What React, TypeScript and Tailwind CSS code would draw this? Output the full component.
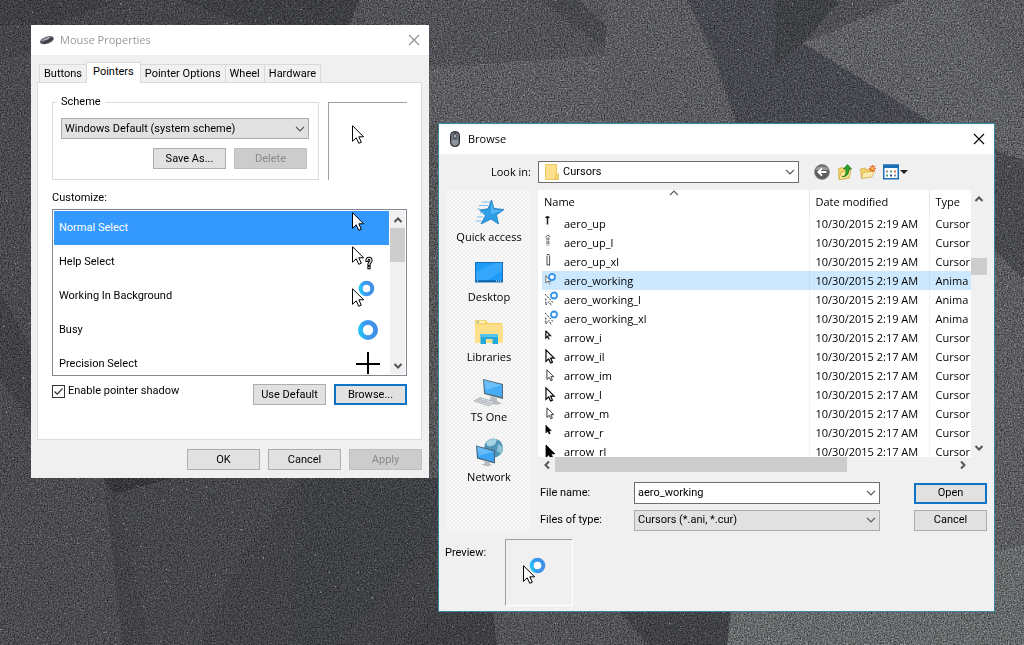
import { useState } from 'react';
import type { ReactNode } from 'react';
import clsx from 'clsx';

type CursorKind = 'arrow' | 'help' | 'working' | 'busy' | 'cross';
type FileGlyph = 'up' | 'upThin' | 'upWide' | 'working' | 'workingDashed' | 'small' | 'outline' | 'outlineThin' | 'solid' | 'solidLarge';

const TABS = ['Buttons', 'Pointers', 'Pointer Options', 'Wheel', 'Hardware'];

const POINTERS: { label: string; kind: CursorKind }[] = [
    { label: 'Normal Select', kind: 'arrow' },
    { label: 'Help Select', kind: 'help' },
    { label: 'Working In Background', kind: 'working' },
    { label: 'Busy', kind: 'busy' },
    { label: 'Precision Select', kind: 'cross' },
];

const FILES: { name: string; date: string; type: string; glyph: FileGlyph }[] = [
    { name: 'aero_up', date: '10/30/2015 2:19 AM', type: 'Cursor', glyph: 'up' },
    { name: 'aero_up_l', date: '10/30/2015 2:19 AM', type: 'Cursor', glyph: 'upThin' },
    { name: 'aero_up_xl', date: '10/30/2015 2:19 AM', type: 'Cursor', glyph: 'upWide' },
    { name: 'aero_working', date: '10/30/2015 2:19 AM', type: 'Anima', glyph: 'working' },
    { name: 'aero_working_l', date: '10/30/2015 2:19 AM', type: 'Anima', glyph: 'workingDashed' },
    { name: 'aero_working_xl', date: '10/30/2015 2:19 AM', type: 'Anima', glyph: 'workingDashed' },
    { name: 'arrow_i', date: '10/30/2015 2:17 AM', type: 'Cursor', glyph: 'small' },
    { name: 'arrow_il', date: '10/30/2015 2:17 AM', type: 'Cursor', glyph: 'outline' },
    { name: 'arrow_im', date: '10/30/2015 2:17 AM', type: 'Cursor', glyph: 'outlineThin' },
    { name: 'arrow_l', date: '10/30/2015 2:17 AM', type: 'Cursor', glyph: 'outline' },
    { name: 'arrow_m', date: '10/30/2015 2:17 AM', type: 'Cursor', glyph: 'outlineThin' },
    { name: 'arrow_r', date: '10/30/2015 2:17 AM', type: 'Cursor', glyph: 'solid' },
    { name: 'arrow_rl', date: '10/30/2015 2:17 AM', type: 'Cursor', glyph: 'solidLarge' },
];

const ARROW = 'M.5 .7V16.3L4.2 12.8L6.8 18.3L9.3 17.2L6.8 11.8H11.6Z';

function Wallpaper() {
    return (
        <svg className="absolute inset-0 h-full w-full" viewBox="0 0 1024 645" preserveAspectRatio="none" aria-hidden="true">
            <defs>
                <filter id="grain" x="0" y="0" width="100%" height="100%" colorInterpolationFilters="sRGB">
                    <feTurbulence type="fractalNoise" baseFrequency="0.7" numOctaves="2" seed="4" />
                    <feColorMatrix type="matrix" values="1.1 0 0 0 -0.06  1.1 0 0 0 -0.06  1.1 0 0 0 -0.06  0 0 0 0 1" />
                </filter>
                <filter id="specks" x="0" y="0" width="100%" height="100%" colorInterpolationFilters="sRGB">
                    <feTurbulence type="fractalNoise" baseFrequency="0.35" numOctaves="1" seed="11" />
                    <feColorMatrix type="matrix" values="0 0 0 0 0.72  0 0 0 0 0.73  0 0 0 0 0.75  9 0 0 0 -6.5" />
                </filter>
            </defs>
            <rect width="1024" height="645" fill="#56575b" />
            <path d="M0 0H359L345 40L0 120Z" fill="#45464a" />
            <path d="M0 0H120L50 25H0Z" fill="#3f4044" />
            <path d="M180 0H359L349 25H250Z" fill="#3e3f44" />
            <path d="M359 0H570L608 28V54L424 70H345Z" fill="#525358" />
            <path d="M540 0H578L608 28V50Z" fill="#48494d" />
            <path d="M424 68L608 55L600 123H424Z" fill="#5d5e62" />
            <path d="M608 0H688L736 123H600Z" fill="#5b5c60" />
            <path d="M688 0H775L933 123H736L716 60Z" fill="#484950" />
            <path d="M775 0H841L803 43L775 66Z" fill="#404145" />
            <path d="M841 0H906L803 43Z" fill="#505155" />
            <path d="M906 0H1024V160L933 123L803 43Z" fill="#606165" />
            <path d="M960 0H1024V90Z" fill="#5b5c60" />
            <path d="M994 150L1024 160V280L994 250Z" fill="#4a4b50" />
            <path d="M994 250L1024 280V540L994 560Z" fill="#5c5d61" />
            <path d="M0 60L31 52V360L0 430Z" fill="#4a4b50" />
            <path d="M0 290L31 350V420L0 380Z" fill="#414246" />
            <path d="M0 380L31 420V478H0Z" fill="#4a4b4f" />
            <path d="M0 478H104L122 645H0Z" fill="#4b4c50" />
            <path d="M104 478H438V645H122Z" fill="#424347" />
            <path d="M115 494L104 478H172Z" fill="#36373c" />
            <path d="M172 478H300L240 560L200 645H150L115 494Z" fill="#46474b" />
            <path d="M300 478H438V530L340 645H290Z" fill="#404146" />
            <path d="M438 605H493L497 645H400Z" fill="#3f4044" />
            <path d="M493 605H614L648 645H497Z" fill="#525357" />
            <path d="M614 605H732L727 645H648Z" fill="#414246" />
            <path d="M732 605L1024 545V645H727Z" fill="#676a6b" />
            <rect width="1024" height="645" filter="url(#grain)" className="opacity-70 mix-blend-overlay" />
            <rect width="1024" height="645" filter="url(#specks)" className="opacity-70" />
        </svg>
    );
}

function Chevron({ className, thick = false }: { className?: string; thick?: boolean }) {
    return (
        <svg viewBox="0 0 10 6" className={clsx('h-1.5 w-2.5 shrink-0', className)} fill="none" stroke="#555" strokeWidth={thick ? 2 : 1.2} aria-hidden="true">
            {thick ? <path d="M1.5 1L5 4.5L8.5 1" /> : <path d="M1 .8L5 4.8L9 .8" />}
        </svg>
    );
}

function CloseButton({ muted = false }: { muted?: boolean }) {
    return (
        <button type="button" aria-label="Close" className="flex h-full w-[31px] items-center justify-center">
            <svg viewBox="0 0 12 12" className="h-3 w-3" fill="none" stroke={muted ? '#8c8c8c' : '#000'} strokeWidth="1.1">
                <path d="M1 1L11 11M11 1L1 11" />
            </svg>
        </button>
    );
}

interface PushButtonProps {
    children: ReactNode;
    primary?: boolean;
    disabled?: boolean;
}

function PushButton({ children, primary = false, disabled = false }: PushButtonProps) {
    return (
        <button
            type="button"
            disabled={disabled}
            className={clsx(
                'flex h-[21px] w-[73px] shrink-0 items-center justify-center',
                primary ? 'border-2 border-[#0f74c8] bg-[#e1e1e1]' : 'border',
                !primary && (disabled ? 'border-[#bfbfbf] bg-[#cccccc] text-[#8a8a8a]' : 'border-[#adadad] bg-[#e1e1e1]'),
            )}
        >
            {children}
        </button>
    );
}

function Ring({ cx, cy, r, width, id }: { cx: number; cy: number; r: number; width: number; id: string }) {
    return (
        <>
            <defs>
                <linearGradient id={id} x1="0" y1="0.6" x2="1" y2="0.4">
                    <stop offset="0" stopColor="#25c3f5" />
                    <stop offset="0.3" stopColor="#3b9cf0" />
                    <stop offset="1" stopColor="#3f8fe6" />
                </linearGradient>
            </defs>
            <circle cx={cx} cy={cy} r={r} fill="#fff" stroke={`url(#${id})`} strokeWidth={width} />
        </>
    );
}

function CursorPicture({ kind, id }: { kind: CursorKind; id: string }) {
    return (
        <svg viewBox="0 0 32 32" className="h-8 w-8 shrink-0" aria-hidden="true">
            {kind === 'cross' && <path d="M4 16H28M16 4V28" stroke="#000" strokeWidth="2" />}
            {kind === 'busy' && <Ring cx={16} cy={16} r={7.6} width={4.8} id={id} />}
            {kind === 'working' && <Ring cx={14.5} cy={8.5} r={5.8} width={4} id={id} />}
            {kind !== 'cross' && kind !== 'busy' && (
                <path
                    d={ARROW}
                    transform={kind === 'working' ? 'translate(0 8)' : undefined}
                    fill="#fff"
                    stroke="#000"
                    strokeWidth="1"
                    strokeLinejoin="round"
                />
            )}
            {kind === 'help' && (
                <g fill="none" strokeLinecap="square">
                    <path d="M15 14.5C15 11.500 19 11.500 19 14.500C19 16.500 17 16.400 17 18.500M17 21.300V21.600" stroke="#000" strokeWidth="3.2" />
                    <path d="M15 14.5C15 11.500 19 11.500 19 14.500C19 16.500 17 16.400 17 18.500M17 21.300V21.600" stroke="#fff" strokeWidth="1.2" />
                </g>
            )}
        </svg>
    );
}

function FileIcon({ glyph }: { glyph: FileGlyph }) {
    return (
        <svg viewBox="0 0 16 18" className="h-[18px] w-4 shrink-0" fill="none" stroke="#222" aria-hidden="true">
            {glyph === 'up' && <path d="M2.5 2.5V9.5M.8 3C1.200 1.200 3.800 1.200 4.200 3" strokeWidth="1.500" />}
            {glyph === 'upThin' && <path d="M2 3.500V11.500M3.800 3.500V11.500M.3 3.500L2 1.500H4L5.500 3.500" strokeWidth=".8" strokeDasharray="3 .6" />}
            {glyph === 'upWide' && <path d="M2 2.500V12M4.600 2.500V12M2 12H5M2 1.500H4.600" strokeWidth=".8" />}
            {glyph === 'working' && (
                <>
                    <path d="M.8 3V11L3 9L5 12.500M1 4L6 9.400H3" stroke="#555" fill="#fff" strokeWidth=".8" />
                    <circle cx="7" cy="5" r="3" fill="#fff" stroke="#3895ee" strokeWidth="1.800" />
                </>
            )}
            {glyph === 'workingDashed' && (
                <>
                    <path d="M0 3L8 11.500M.8 7.500V14L4 10.500L6.500 15" strokeWidth="1" strokeDasharray="2 1.200" />
                    <circle cx="9" cy="4.500" r="3" fill="#fff" stroke="#3895ee" strokeWidth="1.800" />
                </>
            )}
            {glyph === 'small' && <path d="M.8 1.800V9L2.600 7.400L4.200 10.500M1 2L5.400 6.500H3.200" strokeWidth="1.300" />}
            {glyph === 'outline' && <path d={ARROW} transform="translate(.6 1.4) scale(.74)" strokeWidth="1.600" fill="#fff" stroke="#000" />}
            {glyph === 'outlineThin' && <path d={ARROW} transform="translate(1.6 2.4) scale(.62)" strokeWidth="1.400" fill="#fff" />}
            {glyph === 'solid' && <path d={ARROW} transform="translate(.6 .8) scale(.5)" fill="#000" stroke="#000" />}
            {glyph === 'solidLarge' && <path d={ARROW} transform="translate(.6 1.4) scale(.8)" fill="#000" stroke="#000" />}
        </svg>
    );
}

function MousePropertiesWindow() {
    const [tab, setTab] = useState('Pointers');
    const [selected, setSelected] = useState('Normal Select');
    const [shadow, setShadow] = useState(true);

    return (
        <section
            aria-label="Mouse Properties"
            className="absolute top-[25px] left-[31px] w-[398px] bg-[#f0f0f0] font-['Roboto','Liberation_Sans',sans-serif] text-[11px] leading-4 text-black"
        >
            <header className="flex h-[30px] items-center bg-white pl-2">
                <svg viewBox="0 0 16 16" className="h-4 w-4" aria-hidden="true">
                    <path d="M1 9.500C2 6 8 4 12 4.200C15 4.500 15.500 6.500 14 8.500C12 11 7 12.500 4 12.200C2 12 .8 11 1 9.500Z" fill="#55585e" />
                    <path d="M2 9.300C4 6.500 8 5 11.500 4.800L9 7.500C6.500 8 4 9 2 9.300Z" fill="#a6aab0" />
                    <path d="M5 11L13.500 6.500" stroke="#34373c" strokeWidth="1.500" />
                </svg>
                <h1 className="ml-[5px] flex-1 font-['Open_Sans','Noto_Sans',sans-serif] text-[#999]">Mouse Properties</h1>
                <CloseButton muted />
            </header>

            <div className="pt-[7px] pr-[7px] pb-2 pl-1.5">
                <div role="tablist" className="flex items-end pl-[3px]">
                    {TABS.map((name) => (
                        <button
                            key={name}
                            type="button"
                            role="tab"
                            aria-selected={tab === name}
                            onClick={() => setTab(name)}
                            className={clsx(
                                '-ml-px border border-b-0 border-[#d9d9d9]',
                                tab === name ? 'relative -mb-px h-[21px] bg-white px-1.5 pb-0.5' : 'h-[18px] bg-[#f0f0f0] px-1',
                            )}
                        >
                            {name}
                        </button>
                    ))}
                </div>

                <div className="border border-[#dcdcdc] bg-white px-3.5 pt-[11px] pb-[34px]">
                    <div className="flex gap-[9px]">
                        <fieldset className="min-w-0 flex-1 border border-[#dcdcdc] pr-[9px] pb-2.5 pl-2">
                            <legend className="-ml-1 px-1">Scheme</legend>
                            <div className="relative mt-2 flex items-center">
                                <select
                                    aria-label="Scheme"
                                    className="h-[21px] w-full appearance-none border border-[#adadad] bg-[#e1e1e1] pl-[3px]"
                                    defaultValue="default"
                                >
                                    <option value="default">Windows Default (system scheme)</option>
                                    <option value="none">(None)</option>
                                </select>
                                <Chevron className="pointer-events-none absolute right-1" />
                            </div>
                            <div className="mt-[9px] flex justify-end gap-2 pr-0.5">
                                <PushButton>Save As...</PushButton>
                                <PushButton disabled>Delete</PushButton>
                            </div>
                        </fieldset>
                        <div className="mt-2 w-[79px] border-t border-l border-[#a0a0a0] pt-[22px] pl-[23px]">
                            <CursorPicture kind="arrow" id="scheme-ring" />
                        </div>
                    </div>

                    <p id="customize" className="mt-2.5">
                        Customize:
                    </p>
                    <div className="mt-[3px] flex h-[167px] gap-px border border-[#828790] p-px">
                        <ul role="listbox" aria-labelledby="customize" className="flex-1 overflow-hidden">
                            {POINTERS.map(({ label, kind }) => (
                                <li
                                    key={label}
                                    role="option"
                                    aria-selected={selected === label}
                                    onClick={() => setSelected(label)}
                                    className={clsx(
                                        'flex h-[34px] items-center justify-between px-[5px]',
                                        selected === label && 'bg-[#3399ff] text-white',
                                    )}
                                >
                                    {label}
                                    <CursorPicture kind={kind} id={`ring-${kind}`} />
                                </li>
                            ))}
                        </ul>
                        <div className="flex w-[15px] flex-col items-center bg-[#f0f0f0]">
                            <button type="button" aria-label="Scroll up" className="flex h-[17px] w-full shrink-0 items-center justify-center">
                                <Chevron thick className="rotate-180" />
                            </button>
                            <div className="h-[34px] w-full bg-[#cdcdcd]" />
                            <div className="flex-1" />
                            <button type="button" aria-label="Scroll down" className="flex h-[17px] w-full shrink-0 items-center justify-center">
                                <Chevron thick />
                            </button>
                        </div>
                    </div>

                    <div className="mt-2 flex items-start gap-2">
                        <label className="flex flex-1 items-center gap-[3px] leading-[14px]">
                            <span className="relative flex">
                                <input
                                    type="checkbox"
                                    checked={shadow}
                                    onChange={(e) => setShadow(e.target.checked)}
                                    className="h-[13px] w-[13px] appearance-none border border-[#333] bg-white"
                                />
                                {shadow && (
                                    <svg viewBox="0 0 13 13" className="pointer-events-none absolute inset-0" fill="none" stroke="#333" strokeWidth="1.2">
                                        <path d="M2.5 6.5L5.2 9.2L10.5 3.5" />
                                    </svg>
                                )}
                            </span>
                            Enable pointer shadow
                        </label>
                        <PushButton>Use Default</PushButton>
                        <PushButton primary>Browse...</PushButton>
                    </div>
                </div>

                <div className="mt-[9px] flex justify-end gap-2">
                    <PushButton>OK</PushButton>
                    <PushButton>Cancel</PushButton>
                    <PushButton disabled>Apply</PushButton>
                </div>
            </div>
        </section>
    );
}

function QuickAccessIcon() {
    return (
        <svg viewBox="0 0 32 32" className="h-8 w-8" aria-hidden="true">
            <path d="M18.500 3L21 11.500L31 12.500L23.500 18L25.500 27L18 22L8 27L12.500 18.500L6.500 13L15 11.800Z" fill="#2f9fe8" stroke="#1976c0" strokeWidth=".8" />
            <path d="M18.500 5L20.500 13L29 13.500L18 17Z" fill="#56b8f5" />
            <path d="M9 5H17M6 8.500H15M4 12H7M7 16H11M4 20H10M3 24H8" stroke="#7cc2f0" strokeWidth="1" />
        </svg>
    );
}

function DesktopIcon() {
    return (
        <svg viewBox="0 0 32 32" className="h-8 w-8" aria-hidden="true">
            <rect x="2.5" y="5.500" width="27" height="19.500" fill="#1e9bf8" stroke="#1272bd" />
            <path d="M3 24V15.500L22 6H29V13.500L14 24Z" fill="#35a8fb" />
            <path d="M3 24H29" stroke="#0c5ea3" strokeWidth="1.500" />
            <path d="M4 24H6M23 24H28" stroke="#e8f5ff" strokeDasharray="1 1" />
        </svg>
    );
}

function LibrariesIcon() {
    return (
        <svg viewBox="0 0 32 32" className="h-8 w-8" aria-hidden="true">
            <path d="M2 3H13L15 6H29V25H2Z" fill="#f7d268" />
            <path d="M3 4H12V6H3Z" fill="#fff4c4" />
            <path d="M3.500 5H6" stroke="#3aa655" />
            <path d="M2 7.500H30V26H2Z" fill="#ffe08a" />
            <path d="M7.500 27V17H25V27H19.500V22H13V27Z" fill="#22a8dc" />
            <path d="M7.500 17H25V20H7.500Z" fill="#55c5ee" />
        </svg>
    );
}

function ComputerIcon() {
    return (
        <svg viewBox="0 0 32 32" className="h-8 w-8" aria-hidden="true">
            <path d="M10 2L30 7V22L11 17Z" fill="#5a6b78" />
            <path d="M11 3.200L29 8V20L12 16Z" fill="#45acf5" />
            <path d="M11 3.200L29 8L13 13Z" fill="#6cc0fa" />
            <path d="M18 19L24 21V24L29 26.500L23 28L16 25.500Z" fill="#b9bfc4" />
            <path d="M7 20.500L22 25L16 29L1 24Z" fill="#dfe2e4" stroke="#9ca3a8" strokeWidth=".7" />
            <path d="M5 22L19 26.500M3.500 23L17.500 27.600M9 21.500L4 24.500M14 23L9 26" stroke="#a9afb4" strokeWidth=".7" />
        </svg>
    );
}

function NetworkIcon() {
    return (
        <svg viewBox="0 0 32 32" className="h-8 w-8" aria-hidden="true">
            <circle cx="20.500" cy="11" r="9.500" fill="#4f95b8" />
            <path d="M13 5.500C16 1.500 21 1.500 24 2.500L22 7.500L17 9.500L14 8.500Z" fill="#a6d2df" />
            <path d="M25 6.500L30 10.500L28 16.500L24 14.500Z" fill="#8fc4d6" />
            <path d="M3 8.500L22 13.500V26.500L4 21.500Z" fill="#4a6172" />
            <path d="M4 9.800L21 14.500V25L5 20.500Z" fill="#3ba7f4" />
            <path d="M4 9.800L21 14.500L6 18.500Z" fill="#67bdfa" />
            <path d="M11 23.500L17 25.500V27.500H20L15 29.500L8 27.500L12 26.500Z" fill="#b4bbc0" />
        </svg>
    );
}

const PLACES: { label: string; icon: ReactNode }[] = [
    { label: 'Quick access', icon: <QuickAccessIcon /> },
    { label: 'Desktop', icon: <DesktopIcon /> },
    { label: 'Libraries', icon: <LibrariesIcon /> },
    { label: 'TS One', icon: <ComputerIcon /> },
    { label: 'Network', icon: <NetworkIcon /> },
];

function BrowseToolbar() {
    return (
        <div className="flex items-center gap-[7px]">
            <button type="button" aria-label="Back">
                <svg viewBox="0 0 16 16" className="h-4 w-4">
                    <circle cx="8" cy="8" r="7.500" fill="#5c5c5c" stroke="#8f8f8f" strokeWidth=".8" />
                    <path d="M1.500 6C3 1 13 1 14.500 6Z" fill="#9b9b9b" />
                    <path d="M12.500 8H4.500M8 4.300L4.200 8L8 11.700" stroke="#fff" strokeWidth="1.800" fill="none" />
                </svg>
            </button>
            <button type="button" aria-label="Up one level">
                <svg viewBox="0 0 16 16" className="h-4 w-4">
                    <path d="M1.500 4.500L6 3.500L7 5H12.500V14L2 15.500Z" fill="#f5d76e" stroke="#c9a234" strokeWidth=".7" />
                    <path d="M4 8L14 6L12 14L2 15.500Z" fill="#fbe798" stroke="#c9a234" strokeWidth=".7" />
                    <path d="M5 12.500C9 12.500 9.200 9 9 5H6.500L10.500 .5L14.500 5H12C12 10 10 13 5 12.500Z" fill="#2fa32f" stroke="#126b18" strokeWidth=".7" />
                </svg>
            </button>
            <button type="button" aria-label="Create new folder">
                <svg viewBox="0 0 16 16" className="h-4 w-4">
                    <path d="M.5 5L5 4L6 5.500H11.500V12L1.500 14.500Z" fill="#f3d36b" stroke="#cda640" strokeWidth=".7" />
                    <path d="M3 8.500L14.500 7L12 13L1.500 14.500Z" fill="#fcebae" stroke="#cda640" strokeWidth=".7" />
                    <path d="M12.500 1V8M9 4.500H16M10 2L15 7M15 2L10 7" stroke="#e8622a" strokeWidth="1.100" />
                    <circle cx="12.500" cy="4.500" r="1.300" fill="#ffd24a" />
                </svg>
            </button>
            <button type="button" aria-label="View menu" className="flex items-center">
                <svg viewBox="0 0 16 16" className="h-4 w-4">
                    <rect x=".75" y="1.250" width="14.500" height="13.500" fill="#fff" stroke="#1b6fb5" strokeWidth="1.500" />
                    <path d="M0 .5H16V4H0Z" fill="#1b6fb5" />
                    <path d="M3 7.500H5M11 11.500H13" stroke="#8a8f94" strokeWidth="2" />
                    <path d="M7 7.500H9M3 11.500H5" stroke="#4b9e6a" strokeWidth="2" />
                    <path d="M11 7.500H13" stroke="#d07a52" strokeWidth="2" />
                    <path d="M7 11.500H9" stroke="#2c4f9c" strokeWidth="2" />
                </svg>
                <svg viewBox="0 0 8 4" className="ml-px h-1 w-2">
                    <path d="M0 0H8L4 4Z" fill="#222" />
                </svg>
            </button>
        </div>
    );
}

function BrowseWindow() {
    const [selected, setSelected] = useState('aero_working');

    return (
        <section
            aria-label="Browse"
            className="absolute top-[123px] left-[438px] w-[557px] border border-[#3c87a3] bg-[#f0f0f0] font-['Roboto','Liberation_Sans',sans-serif] text-[11px] leading-4 text-black"
        >
            <header className="flex h-[30px] items-center bg-white pl-2">
                <svg viewBox="0 0 16 16" className="h-4 w-4" aria-hidden="true">
                    <rect x="3.500" y=".5" width="9" height="15" rx="4" fill="#6a7078" stroke="#25282c" />
                    <path d="M5 9H11V12C11 15 5 15 5 12Z" fill="#8d949c" />
                    <path d="M8 1V8" stroke="#25282c" />
                    <rect x="7" y="3" width="2" height="4" rx="1" fill="#c9ced3" stroke="#25282c" strokeWidth=".5" />
                </svg>
                <h2 className="ml-[5px] flex-1 font-['Open_Sans','Noto_Sans',sans-serif]">Browse</h2>
                <CloseButton />
            </header>

            <div className="pt-[7px] pr-[7px] pb-[5px] pl-1.5">
                <div className="flex h-[22px] items-center">
                    <label htmlFor="look-in" className="w-[86px] text-right font-['Open_Sans','Noto_Sans',sans-serif]">
                        Look in:
                    </label>
                    <div className="relative mr-[15px] ml-[7px] flex w-[261px] items-center">
                        <select id="look-in" className="h-[22px] w-full appearance-none border border-[#6e6e6e] bg-white pl-6">
                            <option>Cursors</option>
                        </select>
                        <svg viewBox="0 0 14 16" className="pointer-events-none absolute left-[7px] h-4 w-3.5" aria-hidden="true">
                            <path d="M.5 .5H11.500V15.500H.5Z" fill="#fce08b" stroke="#eec65a" />
                            <path d="M11 10H13.500V15.500H10.500Z" fill="#f5d675" stroke="#e3b94c" strokeWidth=".7" />
                        </svg>
                        <Chevron className="pointer-events-none absolute right-1" />
                    </div>
                    <BrowseToolbar />
                </div>

                <div className="mt-[7px] flex gap-[7px]">
                    <nav
                        aria-label="Places"
                        className="ml-0.5 flex w-[84px] flex-col gap-3 bg-[#f0f0f0] bg-[conic-gradient(#f8f8f8_25%,#f0f0f0_0_50%,#f8f8f8_0_75%,#f0f0f0_0)] bg-[size:4px_4px] pt-[7px] font-['Open_Sans','Noto_Sans',sans-serif]"
                    >
                        {PLACES.map(({ label, icon }) => (
                            <button key={label} type="button" className="flex flex-col items-center">
                                {icon}
                                {label}
                            </button>
                        ))}
                    </nav>

                    <div className="min-w-0 flex-1">
                        <div className="flex">
                            <div className="h-[267px] min-w-0 flex-1 overflow-hidden bg-white pl-1 font-['Open_Sans','Noto_Sans',sans-serif]">
                                <table className="w-full table-fixed">
                                    <colgroup>
                                        <col />
                                        <col className="w-[120px]" />
                                        <col className="w-[42px]" />
                                    </colgroup>
                                    <thead>
                                        <tr className="h-6 text-left">
                                            <th className="relative pl-0.5 font-normal">
                                                Name
                                                <Chevron className="absolute top-0 left-1/2 -ml-1.5 rotate-180" />
                                            </th>
                                            <th className="border-l border-[#e5e5e5] pl-1.5 font-normal">Date modified</th>
                                            <th className="border-l border-[#e5e5e5] pl-1.5 font-normal">Type</th>
                                        </tr>
                                    </thead>
                                    <tbody>
                                        {FILES.map((file) => (
                                            <tr
                                                key={file.name}
                                                onClick={() => setSelected(file.name)}
                                                className={clsx('h-[19px]', selected === file.name && 'bg-[#cce8ff]')}
                                            >
                                                <td>
                                                    <div className="flex h-[19px] items-center gap-[3px] pl-[3px]">
                                                        <FileIcon glyph={file.glyph} />
                                                        {file.name}
                                                    </div>
                                                </td>
                                                <td className="border-l border-black/5 pl-1.5 whitespace-nowrap">{file.date}</td>
                                                <td className="border-l border-black/5 pl-1.5 whitespace-nowrap">{file.type}</td>
                                            </tr>
                                        ))}
                                    </tbody>
                                </table>
                            </div>
                            <div className="flex w-4 flex-col">
                                <button type="button" aria-label="Scroll up" className="flex h-[18px] items-center justify-center">
                                    <Chevron thick className="rotate-180" />
                                </button>
                                <div className="mt-[50px] h-[17px] bg-[#cdcdcd]" />
                                <div className="flex-1" />
                                <button type="button" aria-label="Scroll down" className="flex h-[18px] items-center justify-center">
                                    <Chevron thick />
                                </button>
                            </div>
                        </div>
                        <div className="flex h-[15px] items-center pr-4">
                            <button type="button" aria-label="Scroll left" className="flex w-[17px] items-center justify-center">
                                <Chevron thick className="rotate-90" />
                            </button>
                            <div className="h-full w-[292px] bg-[#cdcdcd]" />
                            <div className="flex-1" />
                            <button type="button" aria-label="Scroll right" className="flex w-[17px] items-center justify-center">
                                <Chevron thick className="-rotate-90" />
                            </button>
                        </div>

                        <div className="mt-2.5 flex h-[22px] items-center">
                            <label htmlFor="file-name" className="w-24 pl-0.5">
                                File name:
                            </label>
                            <div className="mr-[34px] flex h-[22px] min-w-0 flex-1 items-center border border-[#6e6e6e] bg-white">
                                <input
                                    id="file-name"
                                    type="text"
                                    value={selected}
                                    onChange={(e) => setSelected(e.target.value)}
                                    className="min-w-0 flex-1 bg-transparent pl-[3px] outline-none"
                                />
                                <button type="button" aria-label="Recent files" className="pr-[3px]">
                                    <Chevron />
                                </button>
                            </div>
                            <PushButton primary>Open</PushButton>
                        </div>
                        <div className="mt-[5px] flex h-[22px] items-center">
                            <label htmlFor="file-type" className="w-24 pl-0.5">
                                Files of type:
                            </label>
                            <div className="relative mr-[34px] flex min-w-0 flex-1 items-center">
                                <select id="file-type" className="h-[21px] w-full appearance-none border border-[#adadad] bg-[#e1e1e1] pl-[3px]">
                                    <option>Cursors (*.ani, *.cur)</option>
                                </select>
                                <Chevron className="pointer-events-none absolute right-1" />
                            </div>
                            <PushButton>Cancel</PushButton>
                        </div>
                    </div>
                </div>

                <div className="mt-2 flex">
                    <p className="w-[60px] pt-1.5">Preview:</p>
                    <div className="h-[67px] w-[68px] border border-t-[#a0a0a0] border-r-white border-b-white border-l-[#a0a0a0] pt-[17px] pl-[17px]">
                        <CursorPicture kind="working" id="preview-ring" />
                    </div>
                </div>
            </div>
        </section>
    );
}

export default function App() {
    return (
        <main className="relative min-h-screen w-full overflow-hidden bg-[#56575b]">
            <Wallpaper />
            <MousePropertiesWindow />
            <BrowseWindow />
        </main>
    );
}
